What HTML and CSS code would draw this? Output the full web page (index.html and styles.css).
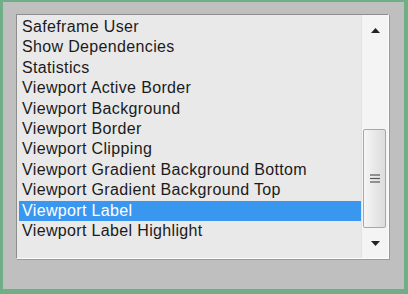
FILE: index.html
```html
<!DOCTYPE html>
<html>
<head>
<meta charset="utf-8">
<link rel="stylesheet" href="styles.css">
</head>
<body>
<div class="frame">
	<div class="listbox">
		<ul class="items">
			<li>Safeframe User</li>
			<li>Show Dependencies</li>
			<li>Statistics</li>
			<li>Viewport Active Border</li>
			<li>Viewport Background</li>
			<li>Viewport Border</li>
			<li>Viewport Clipping</li>
			<li>Viewport Gradient Background Bottom</li>
			<li>Viewport Gradient Background Top</li>
			<li class="selected">Viewport Label</li>
			<li>Viewport Label Highlight</li>
		</ul>
		<div class="scrollbar">
			<div class="arrow">
				<svg width="9" height="5" viewBox="0 0 9 5"><path d="M 0 5 L 4.5 0 L 9 5 Z" fill="#222" /></svg>
			</div>
			<div class="track">
				<div class="thumb">
					<svg width="10" height="9" viewBox="0 0 10 9"><g stroke="#555" stroke-width="1.2"><path d="M 0 1 H 10" /><path d="M 0 4.5 H 10" /><path d="M 0 8 H 10" /></g></svg>
				</div>
			</div>
			<div class="arrow">
				<svg width="9" height="5" viewBox="0 0 9 5"><path d="M 0 0 L 9 0 L 4.5 5 Z" fill="#222" /></svg>
			</div>
		</div>
	</div>
</div>
</body>
</html>
```

FILE: styles.css
```css
html, body
{
	margin: 0;
	padding: 0;
}
body
{
	width: 408px;
	height: 294px;
	overflow: hidden;
	font-family: "Liberation Sans", Arial, sans-serif;
}
.frame
{
	box-sizing: border-box;
	width: 408px;
	height: 294px;
	background: #bfbfbf;
	border-style: solid;
	border-color: #6fae86;
	border-width: 2px 4px 5px 3px;
	padding: 12px 0 0 13px;
}
.listbox
{
	box-sizing: border-box;
	width: 373px;
	height: 245px;
	display: flex;
	background: #e9e9e9;
	border-style: solid;
	border-width: 1px;
	border-color: #8e8e8e #fcfcfc #fcfcfc #8e8e8e;
	box-shadow: 1px 1px 0 #9a9a9a;
}
.items
{
	flex: 1;
	list-style: none;
	margin: 0;
	padding: 2px 0 0 2px;
}
.items li
{
	height: 20.4px;
	line-height: 20px;
	font-size: 16px;
	letter-spacing: 0.35px;
	color: #1b1b1b;
	padding-left: 3px;
	white-space: nowrap;
}
.items li.selected
{
	background: #3a97ef;
	color: #ffffff;
}
.scrollbar
{
	width: 26px;
	display: flex;
	flex-direction: column;
	background: #f4f4f4;
	border-left: 1px solid #e2e2e2;
}
.arrow
{
	height: 30px;
	display: flex;
	align-items: center;
	justify-content: center;
}
.track
{
	flex: 1;
	display: flex;
	flex-direction: column;
	justify-content: flex-end;
	padding: 0 2px 0 1px;
}
.thumb
{
	height: 99px;
	box-sizing: border-box;
	border: 1px solid #a8a8a8;
	border-radius: 2px;
	background: linear-gradient(to right, #f6f6f6, #e6e6e6 60%, #dcdcdc);
	display: flex;
	align-items: center;
	justify-content: center;
}
```
